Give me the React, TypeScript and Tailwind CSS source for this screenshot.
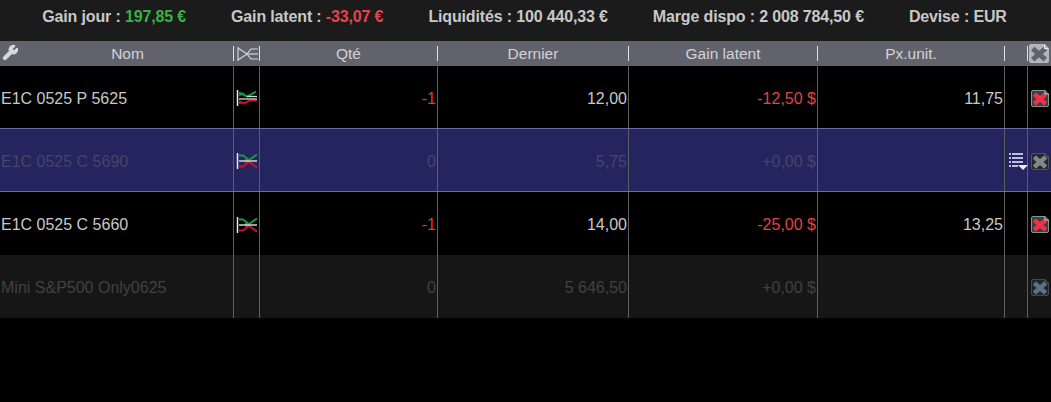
import React from "react";
import { Wrench } from "lucide-react";

const COLS = "grid grid-cols-[233px_26px_178px_191px_189px_187px_23px_24px]";

const StatLabel: React.FC<{ label: string; value: string; color?: string }> = ({ label, value, color }) => (
  <span className="whitespace-nowrap">
    {label} : <span className={color}>{value}</span>
  </span>
);

// spread icon, green and red legs around a white centre line
const SpreadIcon: React.FC<{ swap?: boolean }> = ({ swap }) => (
  <svg width="22" height="16" viewBox="0 0 22 16" fill="none" strokeWidth="2">
    {swap ? (
      <>
        <path d="M3 2.5H7L13 7" stroke="#149a3c" />
        <path d="M21 1.5L13 7H9" stroke="#149a3c" />
        <path d="M3 13.5H7L13 9" stroke="#c4142e" />
        <path d="M21 14.5L13 9H9" stroke="#c4142e" />
        <path d="M3 8H21" stroke="#d4d4dc" strokeWidth="1.5" />
      </>
    ) : (
      <>
        <path d="M3 2.5L11 6.5L20 1.5" stroke="#149a3c" />
        <path d="M3 5.5L8 3" stroke="#149a3c" strokeWidth="1.5" />
        <path d="M3 13L10 12.5L14 10.5H21" stroke="#c4142e" />
        <path d="M3 11L9 14" stroke="#c4142e" strokeWidth="1.5" />
        <path d="M11 6.5H21" stroke="#d8d8d8" strokeWidth="1.3" />
        <path d="M3 9H21" stroke="#d8d8d8" strokeWidth="1.3" />
      </>
    )}
    <path d="M1.5 0V16" stroke="#ececec" strokeWidth="1.5" />
  </svg>
);

const HeaderSpreadIcon: React.FC = () => (
  <svg width="22" height="16" viewBox="0 0 22 16" fill="none" stroke="#d4d4d8" strokeWidth="1.2">
    <path d="M1 1V15" />
    <path d="M1 2L10 8L1 14" />
    <path d="M21 3H14L10 8L14 13H21" />
    <path d="M10 8H21" />
  </svg>
);

const CloseIcon: React.FC<{ box: string; fill: string; cross: string; stroke: string; size?: number }> = ({
  box,
  fill,
  cross,
  stroke,
  size = 18,
}) => (
  <svg width={size} height={size - 1} viewBox="0 0 18 17">
    <path d="M2 .5H14L17.5 4V15A1.5 1.5 0 0 1 16 16.5H2A1.5 1.5 0 0 1 .5 15V2A1.5 1.5 0 0 1 2 .5Z" fill={fill} stroke={box} />
    <path d="M5 5.5L13 12.5M13 5.5L5 12.5" stroke={cross} strokeWidth="4.5" strokeLinecap="square" />
    <path d="M14 .5V4H17.5" fill="none" stroke={stroke} />
  </svg>
);

const ListIcon: React.FC = () => (
  <svg width="19" height="17" viewBox="0 0 19 17" fill="#bcbcdc">
    <rect x="0" y="0" width="2" height="2" />
    <rect x="3" y="0" width="11" height="2" />
    <rect x="0" y="4" width="2" height="2" />
    <rect x="3" y="4" width="11" height="2" />
    <rect x="0" y="8" width="2" height="2" />
    <rect x="3" y="8" width="11" height="2" />
    <rect x="0" y="12" width="2" height="2" />
    <rect x="3" y="12" width="6" height="2" />
    <path d="M9 12H19L14 17Z" fill="#ececec" />
  </svg>
);

type Row = {
  name: string;
  qty: string;
  last: string;
  gain: string;
  price: string;
  kind: "open" | "selected" | "flat";
  height: string;
  textPad: string;
  swap?: boolean;
  noSpread?: boolean;
};

const rows: Row[] = [
  { name: "E1C 0525 P 5625", qty: "-1", last: "12,00", gain: "-12,50 $", price: "11,75", kind: "open", height: "h-[62px]", textPad: "pt-1" },
  { name: "E1C 0525 C 5690", qty: "0", last: "5,75", gain: "+0,00 $", price: "", kind: "selected", height: "h-[64px]", textPad: "pt-1", swap: true },
  { name: "E1C 0525 C 5660", qty: "-1", last: "14,00", gain: "-25,00 $", price: "13,25", kind: "open", height: "h-[63px]", textPad: "pt-0.5", swap: true },
  { name: "Mini S&P500 Only0625", qty: "0", last: "5 646,50", gain: "+0,00 $", price: "", kind: "flat", height: "h-[63px]", textPad: "pt-0.5", noSpread: true },
];

const TableRow: React.FC<{ row: Row }> = ({ row }) => {
  const open = row.kind === "open";
  const rowClass = {
    open: "bg-black text-[#c8c8c8]",
    selected: "bg-[#24245f] text-[#45456b] border-y border-[#6a6aa6]",
    flat: "bg-[#161616] text-[#414141]",
  }[row.kind];
  const line = "border-l border-[#5f5f5f]";
  const icon = `${line} pt-0.5 flex items-center`;
  const num = `${line} ${row.textPad} flex items-center justify-end pr-px`;

  return (
    <div className={`${COLS} ${row.height} ${rowClass}`}>
      <div className={`flex items-center pl-px whitespace-nowrap ${row.textPad}`}>{row.name}</div>
      <div className={`${icon} justify-center`}>
        {!row.noSpread && <SpreadIcon swap={row.swap} />}
      </div>
      <div className={`${num} ${open ? "text-[#d83c3c]" : ""}`}>{row.qty}</div>
      <div className={num}>{row.last}</div>
      <div className={`${num} ${open ? "text-[#e04444]" : ""}`}>{row.gain}</div>
      <div className={num}>{row.price}</div>
      <div className={`${icon} justify-end`}>
        {row.kind === "selected" && (
          <div className="relative left-[1px] shrink-0">
            <ListIcon />
          </div>
        )}
      </div>
      <div className={`${icon} justify-center`}>
        {row.kind === "open" && <CloseIcon box="#7d9a9a" fill="#38413f" cross="#f03048" stroke="#c8d0d0" />}
        {row.kind === "selected" && <CloseIcon box="#4d5560" fill="#23282e" cross="#7f8a88" stroke="#5d656d" />}
        {row.kind === "flat" && <CloseIcon box="#3f4c58" fill="#1f272e" cross="#5f7080" stroke="#4c5864" />}
      </div>
    </div>
  );
};

const HeaderCell: React.FC<{ label?: string }> = ({ label }) => (
  <div className="flex items-center">
    <div className="w-px h-[15px] bg-[#e0e0e0] shrink-0" />
    <div className="flex-1 text-center pt-px">{label}</div>
  </div>
);

export default function App() {
  return (
    <div className="w-[1051px] h-[402px] bg-black overflow-hidden text-base font-['Liberation_Sans',Arial,sans-serif]">
      {/* Account summary */}
      <div className="h-[41px] bg-[#1b1b1b] flex items-center justify-center gap-[45px] pb-2 pr-[2px] text-base tracking-[-0.15px] font-bold text-[#c8c8c8]">
        <StatLabel label="Gain jour" value="197,85 €" color="text-[#3cb043]" />
        <StatLabel label="Gain latent" value="-33,07 €" color="text-[#e8434a]" />
        <StatLabel label="Liquidités" value="100 440,33 €" />
        <StatLabel label="Marge dispo" value="2 008 784,50 €" />
        <StatLabel label="Devise" value="EUR" />
      </div>

      {/* Column titles */}
      <div className={`${COLS} h-[25px] bg-[#62626c] text-[#d2d2d6] text-[15.5px]`}>
        <div className="flex items-center pl-[22px] relative">
          <Wrench className="absolute left-[2px] top-[3px] w-[17px] h-[17px] text-[#d8d8dc] fill-[#d8d8dc]" strokeWidth={1.6} />
          <div className="flex-1 text-center pt-px">Nom</div>
        </div>
        <div className="flex items-center justify-between">
          <div className="w-px h-[15px] bg-[#e0e0e0]" />
          <HeaderSpreadIcon />
        </div>
        <HeaderCell label="Qté" />
        <HeaderCell label="Dernier" />
        <HeaderCell label="Gain latent" />
        <HeaderCell label="Px.unit." />
        <HeaderCell />
        <div className="flex items-center gap-px">
          <div className="w-px h-[15px] bg-[#e0e0e0] shrink-0" />
          <CloseIcon box="#b4b4ba" fill="#b4b4ba" cross="#62626c" stroke="#e8e8ea" size={20} />
        </div>
      </div>

      {rows.map((row) => (
        <TableRow key={row.name} row={row} />
      ))}
    </div>
  );
}
